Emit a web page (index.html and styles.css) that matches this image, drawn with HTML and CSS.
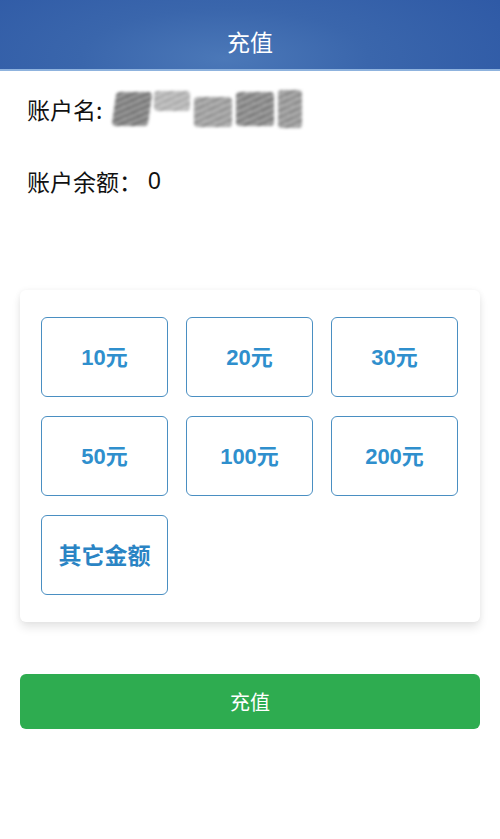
FILE: index.html
```html
<!DOCTYPE html>
<html lang="zh-CN">
<head>
<meta charset="utf-8">
<title>充值</title>
<link rel="stylesheet" href="styles.css">
</head>
<body>
<header class="topbar"><h1 class="title">充值</h1></header>
<section class="info">
  <div class="row name-row">
    <span class="label">账户名:</span>
    <span class="masked" aria-label="已隐藏">
      <i class="blot b1"></i><i class="blot b2"></i><i class="blot b3"></i><i class="blot b4"></i><i class="blot b5"></i>
    </span>
  </div>
  <div class="row balance-row"><span class="label">账户余额：</span><span class="num">0</span></div>
</section>
<section class="card">
  <div class="grid">
    <button class="amt">10元</button>
    <button class="amt">20元</button>
    <button class="amt">30元</button>
    <button class="amt">50元</button>
    <button class="amt">100元</button>
    <button class="amt">200元</button>
    <button class="amt cjk">其它金额</button>
  </div>
</section>
<div class="actions"><button class="submit">充值</button></div>
</body>
</html>
```
FILE: styles.css
```css
* { box-sizing: border-box; }
html, body { margin: 0; padding: 0; background: #fff; }
body {
  font-family: "Noto Sans CJK SC", "Noto Sans", sans-serif;
  color: #111;
  width: 500px;
}
.topbar {
  height: 71px;
  background: radial-gradient(ellipse 320px 110px at 45% 85%, #4b78b8 0%, #3a66ac 45%, #2f5aa6 100%);
  border-bottom: 2px solid #8fb3de;
  display: flex;
  align-items: center;
  justify-content: center;
}
.title {
  margin: 0;
  font-size: 23px;
  font-weight: 400;
  color: #fff;
  padding-top: 12px;
}
.info { padding: 16px 27px 0; }
.row {
  display: flex;
  align-items: center;
  font-size: 23px;
  line-height: 40px;
}
.name-row { height: 44px; }
.balance-row { margin-top: 30px; }
.num { font-family: "Liberation Sans", "Noto Sans", sans-serif; margin-left: 6px; }
.masked {
  display: inline-flex;
  align-items: center;
  gap: 4px;
  margin-left: 12px;
  height: 44px;
  filter: blur(1.8px);
}
.blot {
  display: block;
  height: 34px;
  background: repeating-linear-gradient(-25deg, #444 0 2px, #8a8a8a 2px 4px, #666 4px 5px, #b0b0b0 5px 6px);
  opacity: 0.75;
  border-radius: 4px;
}
.b1 { width: 36px; transform: skewX(-8deg); opacity: .85; }
.b2 { width: 36px; height: 20px; margin-top: -16px; opacity: .5; }
.b3 { width: 38px; height: 30px; opacity: .65; margin-top: 6px; }
.b4 { width: 38px; opacity: .8; }
.b5 { width: 24px; height: 38px; opacity: .7; }
.card {
  margin: 89px 20px 0;
  background: #fff;
  border-radius: 6px;
  box-shadow: 0 6px 10px rgba(0,0,0,0.09), 0 0 6px rgba(0,0,0,0.05);
  padding: 27px 21px 27px;
}
.grid {
  display: grid;
  grid-template-columns: repeat(3, 127px);
  column-gap: 18px;
  row-gap: 19px;
}
.amt {
  height: 80px;
  background: #fff;
  border: 1.5px solid #4a8fc2;
  border-radius: 6px;
  color: #2f8fcd;
  font-family: "Liberation Sans", "Noto Sans CJK SC", sans-serif;
  font-weight: 700;
  font-size: 22px;
  padding: 0 0 5px;
}
.amt.cjk { font-size: 23px; color: #2a84c4; padding-bottom: 2px; }
.actions { padding: 52px 20px 0; }
.submit {
  width: 100%;
  height: 55px;
  border: none;
  border-radius: 6px;
  background: #2eac50;
  color: #fff;
  font-family: "Noto Sans CJK SC", sans-serif;
  font-size: 20px;
}
```
